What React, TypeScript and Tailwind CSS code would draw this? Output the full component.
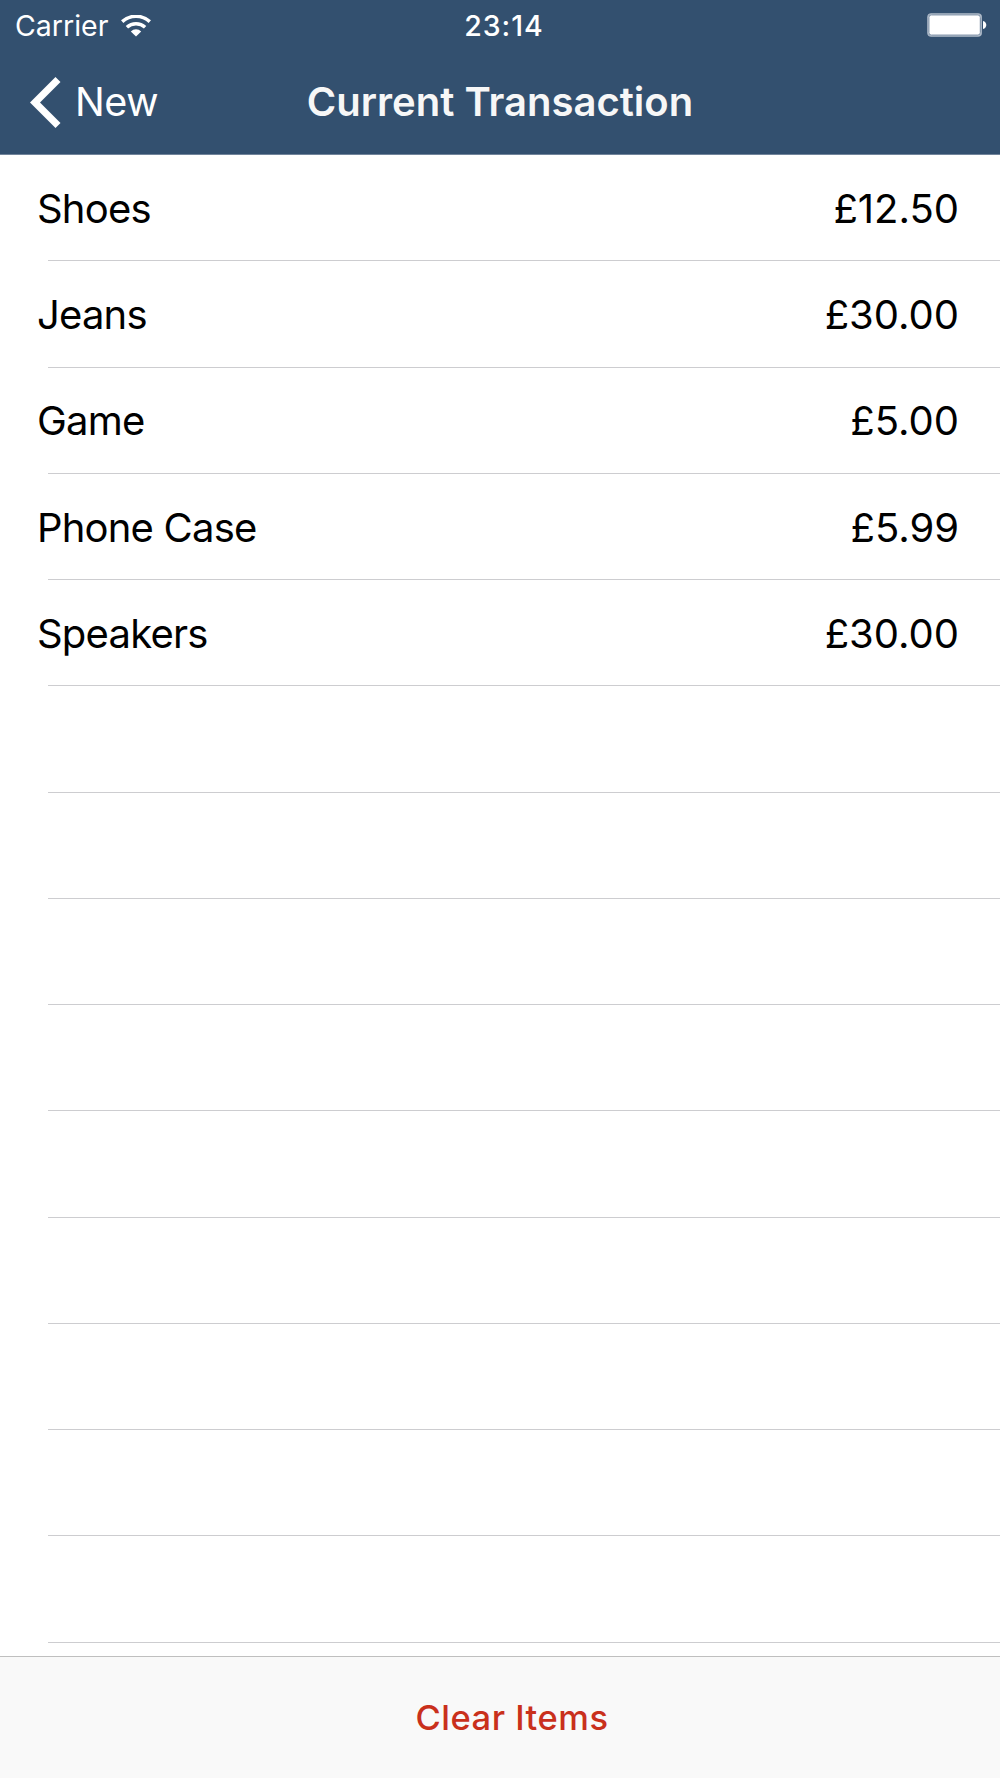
import React, { useState } from 'react';

type Item = {
  name: string;
  price: number;
};

const initialItems: Item[] = [
  { name: 'Shoes', price: 12.5 },
  { name: 'Jeans', price: 30 },
  { name: 'Game', price: 5 },
  { name: 'Phone Case', price: 5.99 },
  { name: 'Speakers', price: 30 },
];

const ROW_COUNT = 14;

const WifiIcon = () => (
  <svg className="w-[30px] h-[22px]" viewBox="0 0 30 22" fill="none" stroke="white">
    <path d="M1.2 6.6 A20.5 20.5 0 0 1 28.8 6.6" strokeWidth="3.5" />
    <path d="M5.9 12.2 A13.4 13.4 0 0 1 24.1 12.2" strokeWidth="3.5" />
    <path d="M9.8 16.4 A7.6 7.6 0 0 1 20.2 16.4 L15 21.6 Z" fill="white" stroke="none" />
  </svg>
);

const BatteryIcon = () => (
  <svg className="w-[61px] h-6" viewBox="0 0 61 24">
    <rect x="0.8" y="0.8" width="53.6" height="22.4" rx="3.4" fill="white" stroke="#a3b0c0" strokeWidth="1.2" />
    <rect x="1.9" y="1.9" width="51.4" height="20.2" rx="2.4" fill="none" stroke="#6f849c" strokeWidth="1" />
    <path d="M56 8 C60.4 8.6 60.4 15.4 56 16 Z" fill="white" />
  </svg>
);

const StatusBar = () => (
  <div className="grid grid-cols-3 items-center h-[51px] pl-[15px] pr-3 text-[28.5px]">
    <div className="flex items-center gap-[13px]">
      <span className="pt-px">Carrier</span>
      <WifiIcon />
    </div>
    <span className="text-center font-medium pl-[5px] pt-px tracking-[1px]">23:14</span>
    <div className="flex justify-end pb-px">
      <BatteryIcon />
    </div>
  </div>
);

const NavBar = () => (
  <div className="grid grid-cols-[1fr_auto_1fr] items-center h-[102px] pl-[30px]">
    <button className="flex items-center gap-[14px] text-[39.5px] tracking-[-0.4px]">
      <svg className="w-[31px] h-[51px]" viewBox="0 0 31 51" fill="white">
        <path d="M0 25.5 L25.5 0 L30.5 5 L10 25.5 L30.5 46 L25.5 51 Z" />
      </svg>
      <span className="pt-0.5">New</span>
    </button>
    <h1 className="text-[40px] font-semibold text-[#f7f7f7] mr-[30px]">Current Transaction</h1>
  </div>
);

const App = () => {
  const [items, setItems] = useState<Item[]>(initialItems);

  return (
    <div className="flex flex-col w-full h-[1778px] bg-white overflow-hidden font-['Inter',sans-serif]">
      <header className="h-[155px] shrink-0 bg-[#33506f] border-b border-[#71849b] text-white">
        <StatusBar />
        <NavBar />
      </header>

      <ul className="flex-1 min-h-0 overflow-hidden text-[40px] text-black">
        {Array.from({ length: ROW_COUNT }, (_, i) => (
          <li key={i} className="h-[106.27px] flex flex-col">
            <div className="flex-1 flex items-center justify-between pt-[2.2px] pl-[37px] pr-[41px]">
              <span className="tracking-[-0.8px]">{items[i]?.name}</span>
              <span>{items[i] && `£${items[i].price.toFixed(2)}`}</span>
            </div>
            <div className="h-px ml-12 bg-[#cdcdd0]" />
          </li>
        ))}
      </ul>

      <footer className="h-[122px] shrink-0 flex items-center justify-center pl-6 bg-[#f9f9f9] border-t border-[#bfbfbf]">
        <button className="text-[34.5px] font-medium tracking-[0.5px] text-[#c9301c]" onClick={() => setItems([])}>
          Clear Items
        </button>
      </footer>
    </div>
  );
};

export default App;
